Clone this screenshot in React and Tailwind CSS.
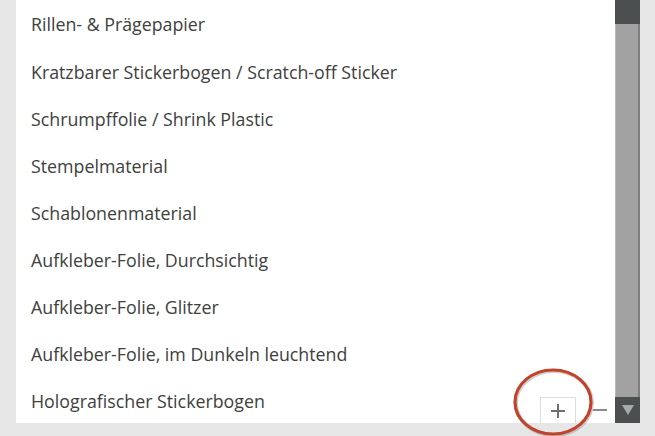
import React from "react";

const items = [
  "Rillen- & Prägepapier",
  "Kratzbarer Stickerbogen / Scratch-off Sticker",
  "Schrumpffolie / Shrink Plastic",
  "Stempelmaterial",
  "Schablonenmaterial",
  "Aufkleber-Folie, Durchsichtig",
  "Aufkleber-Folie, Glitzer",
  "Aufkleber-Folie, im Dunkeln leuchtend",
  "Holografischer Stickerbogen",
];

export default function App() {
  return (
    <div className="relative w-[655px] h-[436px] overflow-hidden bg-[#e6e6e6] flex" style={{ fontFamily: '"Open Sans", "Noto Sans", sans-serif' }}>
      <div className="ml-[16px] w-[599px] h-[423px] bg-white flex flex-col">
        {items.map((t) => (
          <div key={t} className="h-[47px] flex items-center pl-[15px] text-[17.8px] text-[#404040] shrink-0 first:h-[49px]">
            {t}
          </div>
        ))}
      </div>
      <div className="w-[25px] h-[423px] flex flex-col">
        <div className="h-[24px] bg-[#4b4f4f]" />
        <div className="flex-1 bg-[#a2a2a2] border-l border-l-[#b8b8b8] border-r-2 border-r-[#7e7e7e]" />
        <div className="h-[26px] bg-[#4b4f4f] flex items-center justify-center">
          <svg width="14" height="12" viewBox="0 0 14 12">
            <polygon points="1,1 13,1 7,11" fill="#a9a9a9" />
          </svg>
        </div>
      </div>
      <div className="absolute left-[540px] top-[397px] w-[36px] h-[26px] border border-[#dcdcdc] border-b-0 bg-white flex items-center justify-center">
        <svg width="14" height="14" viewBox="0 0 14 14">
          <path d="M7 0v14M0 7h14" stroke="#707070" strokeWidth="2" />
        </svg>
      </div>
      <div className="absolute left-[593px] top-[409px] w-[14px] h-[2px] bg-[#8a8a8a]" />
      <svg className="absolute left-[510px] top-[366px]" width="90" height="72" viewBox="0 0 90 72">
        <ellipse cx="44" cy="37" rx="38" ry="32" fill="none" stroke="#7a7a7a" strokeOpacity="0.35" strokeWidth="4" />
        <ellipse cx="43" cy="36" rx="38" ry="32" fill="none" stroke="#c2432b" strokeWidth="3.2" />
      </svg>
    </div>
  );
}
